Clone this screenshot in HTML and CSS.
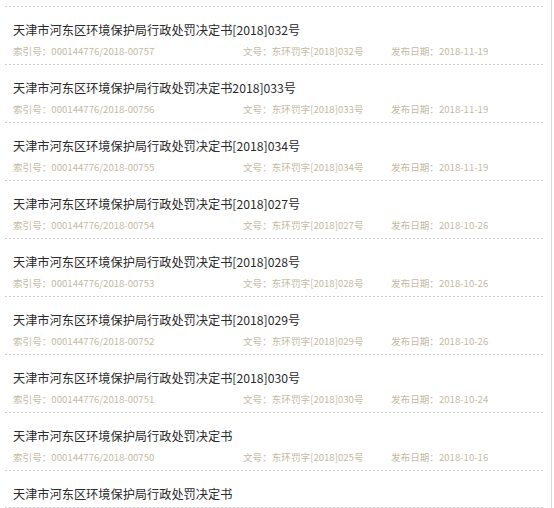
FILE: index.html
```html
<!DOCTYPE html>
<html lang="zh-CN">
<head>
<meta charset="utf-8">
<link rel="stylesheet" href="styles.css">
</head>
<body>
<div class="frame">
  <ul class="list">
    <li class="item">
      <a class="title">天津市河东区环境保护局行政处罚决定书[2018]032号</a>
      <div class="meta"><span>索引号：000144776/2018-00757</span><span>文号：东环罚字[2018]032号</span><span>发布日期：2018-11-19</span></div>
    </li>
    <li class="item">
      <a class="title">天津市河东区环境保护局行政处罚决定书2018]033号</a>
      <div class="meta"><span>索引号：000144776/2018-00756</span><span>文号：东环罚字[2018]033号</span><span>发布日期：2018-11-19</span></div>
    </li>
    <li class="item">
      <a class="title">天津市河东区环境保护局行政处罚决定书[2018]034号</a>
      <div class="meta"><span>索引号：000144776/2018-00755</span><span>文号：东环罚字[2018]034号</span><span>发布日期：2018-11-19</span></div>
    </li>
    <li class="item">
      <a class="title">天津市河东区环境保护局行政处罚决定书[2018]027号</a>
      <div class="meta"><span>索引号：000144776/2018-00754</span><span>文号：东环罚字[2018]027号</span><span>发布日期：2018-10-26</span></div>
    </li>
    <li class="item">
      <a class="title">天津市河东区环境保护局行政处罚决定书[2018]028号</a>
      <div class="meta"><span>索引号：000144776/2018-00753</span><span>文号：东环罚字[2018]028号</span><span>发布日期：2018-10-26</span></div>
    </li>
    <li class="item">
      <a class="title">天津市河东区环境保护局行政处罚决定书[2018]029号</a>
      <div class="meta"><span>索引号：000144776/2018-00752</span><span>文号：东环罚字[2018]029号</span><span>发布日期：2018-10-26</span></div>
    </li>
    <li class="item">
      <a class="title">天津市河东区环境保护局行政处罚决定书[2018]030号</a>
      <div class="meta"><span>索引号：000144776/2018-00751</span><span>文号：东环罚字[2018]030号</span><span>发布日期：2018-10-24</span></div>
    </li>
    <li class="item">
      <a class="title">天津市河东区环境保护局行政处罚决定书</a>
      <div class="meta"><span>索引号：000144776/2018-00750</span><span>文号：东环罚字[2018]025号</span><span>发布日期：2018-10-16</span></div>
    </li>
    <li class="item">
      <a class="title">天津市河东区环境保护局行政处罚决定书</a>
    </li>
  </ul>
</div>
</body>
</html>
```
FILE: styles.css
```css
html, body {
  margin: 0;
  padding: 0;
  background: #fff;
  height: 100%;
  overflow: hidden;
}
body {
  font-family: "Noto Sans CJK SC", "Noto Sans", sans-serif;
}
.frame {
  width: 552px;
  height: 100%;
  border-right: 1px solid #d6d6d6;
  box-sizing: border-box;
  padding-top: 6px;
}
.list {
  list-style: none;
  margin: 0 0 0 5px;
  padding: 0;
  width: 538px;
  padding-top: 1px;
  background: linear-gradient(to right, #cccccc 50%, transparent 50%) repeat-x top left / 4px 1px;
}
.item {
  padding: 16px 0 7px 8px;
  background: linear-gradient(to right, #cccccc 50%, transparent 50%) repeat-x bottom left / 4px 1px;
}
.title {
  display: block;
  font-size: 12.2px;
  line-height: 14px;
  color: #2a2a2a;
  white-space: nowrap;
}
.meta {
  display: grid;
  grid-template-columns: 230px 148px auto;
  margin-top: 8px;
  font-size: 9.6px;
  line-height: 13px;
  color: #c4baa4;
  white-space: nowrap;
}
```
